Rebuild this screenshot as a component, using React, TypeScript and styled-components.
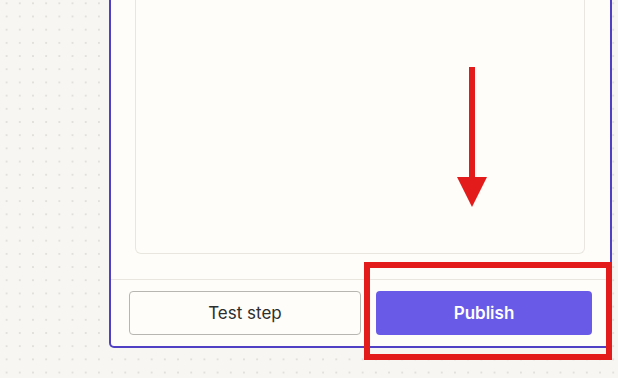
import React from 'react';
import styled, { createGlobalStyle } from 'styled-components';

const GlobalStyle = createGlobalStyle`
    html, body {
        margin: 0;
        padding: 0;
        height: 100%;
        overflow: hidden;
    }
    body {
        background-color: #f7f6f3;
        background-image: radial-gradient(circle at center, #e2e0da 0.9px, transparent 1.2px);
        background-size: 13.2px 13.2px;
        background-position: 0 -3.3px;
        font-family: Inter, "Liberation Sans", sans-serif;
    }
`;

const Canvas = styled.div`
    position: relative;
    width: 618px;
    height: 378px;
`;

const Panel = styled.div`
    box-sizing: border-box;
    margin-left: 109px;
    width: 503px;
    height: 348px;
    display: flex;
    flex-direction: column;
    background: #fffdf9;
    border: 2px solid #5040c4;
    border-top: none;
    border-radius: 0 0 5px 5px;
`;

const Body = styled.div`
    flex: 1;
    display: flex;
    flex-direction: column;
    padding: 0 25px 25px 24px;
`;

const InputBox = styled.div`
    flex: 1;
    border: 1px solid #e8e6df;
    border-top: none;
    border-radius: 0 0 6px 6px;
`;

const Footer = styled.div`
    display: grid;
    grid-template-columns: 232px 216px;
    column-gap: 15px;
    padding: 11px 18px;
    border-top: 1px solid #e8e6df;
`;

const Button = styled.button<{ primary?: boolean }>`
    height: 44px;
    border-radius: 4px;
    font-family: Inter, "Liberation Sans", sans-serif;
    font-size: 17px;
    font-weight: ${props => props.primary ? 600 : 400};
    color: ${props => props.primary ? '#ffffff' : '#2d2e2e'};
    background: ${props => props.primary ? '#695be8' : '#fffdf9'};
    border: ${props => props.primary ? 'none' : '1px solid #b8b6b0'};
    cursor: pointer;
`;

const Highlight = styled.div`
    position: absolute;
    left: 364px;
    top: 262px;
    width: 248px;
    height: 98px;
    box-sizing: border-box;
    border: 6px solid #e31b1b;
    pointer-events: none;
`;

const Arrow = styled.svg`
    position: absolute;
    left: 457px;
    top: 67px;
`;

const App: React.FC = () => {
    return (
        <>
            <GlobalStyle />
            <Canvas>
                <Panel>
                    <Body>
                        <InputBox />
                    </Body>
                    <Footer>
                        <Button>Test step</Button>
                        <Button primary>Publish</Button>
                    </Footer>
                </Panel>
                <Arrow width="30" height="140" viewBox="0 0 30 140">
                    <rect x="12" y="0" width="6" height="112" fill="#e31b1b" />
                    <polygon points="0,110 30,110 15,140" fill="#e31b1b" />
                </Arrow>
                <Highlight />
            </Canvas>
        </>
    );
};

export default App;
